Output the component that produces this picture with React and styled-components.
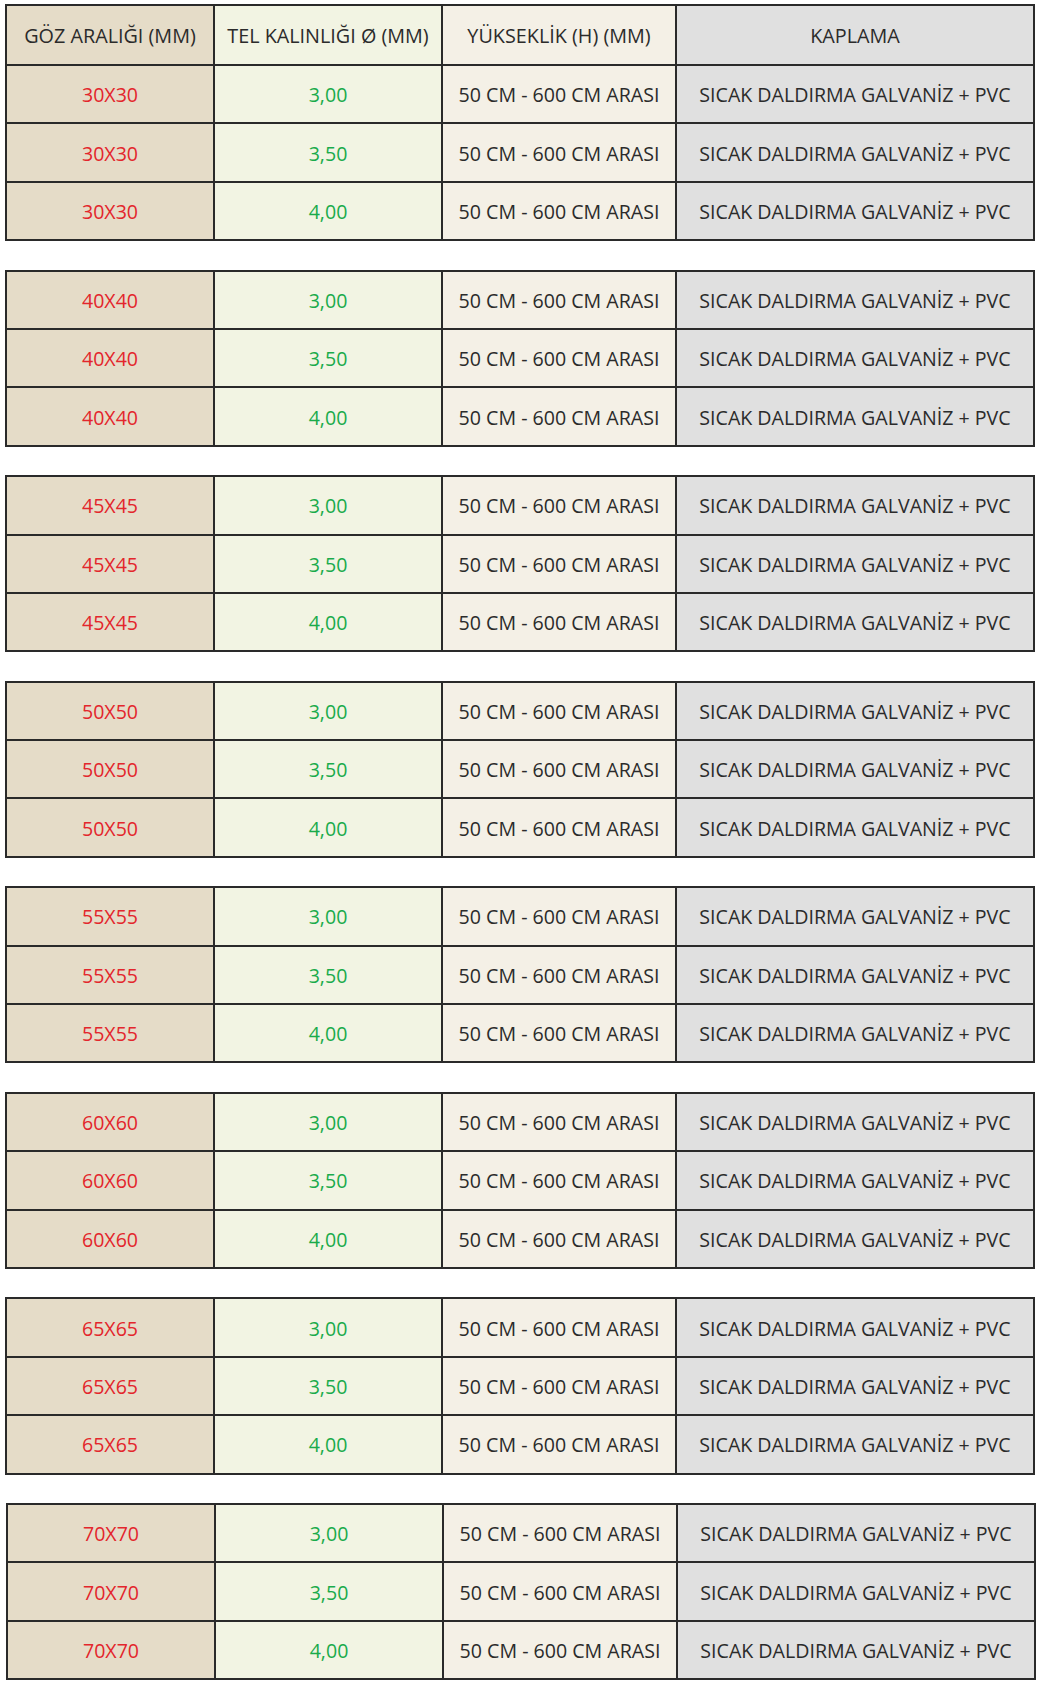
import React from 'react'
import styled, { createGlobalStyle } from 'styled-components'

const GlobalStyle = createGlobalStyle`
    html, body {
        margin: 0;
        padding: 0;
        background: #ffffff;
    }
`

const sizes = ['30X30', '40X40', '45X45', '50X50', '55X55', '60X60', '65X65', '70X70']
const thicknesses = ['3,00', '3,50', '4,00']

const COLS = [
    { bg: '#e5dcc8', width: 208 },
    { bg: '#f2f4e3', width: 228 },
    { bg: '#f4f0e6', width: 234 },
    { bg: '#e0e0e0', width: 358 },
]

export default function App() {
    return (
        <Page>
            <GlobalStyle />
            {sizes.map((size, gi) => (
                <Group key={size} $nudge={gi === sizes.length - 1}>
                    <colgroup>
                        {COLS.map((c, i) => <col key={i} style={{ width: c.width }} />)}
                    </colgroup>
                    {gi === 0 && (
                        <thead>
                            <HeadRow>
                                <HeadCell $bg={COLS[0].bg}>GÖZ ARALIĞI (MM)</HeadCell>
                                <HeadCell $bg={COLS[1].bg}>TEL KALINLIĞI Ø (MM)</HeadCell>
                                <HeadCell $bg={COLS[2].bg}>YÜKSEKLİK (H) (MM)</HeadCell>
                                <HeadCell $bg={COLS[3].bg}>KAPLAMA</HeadCell>
                            </HeadRow>
                        </thead>
                    )}
                    <tbody>
                        {thicknesses.map(t => (
                            <Row key={t}>
                                <Cell $bg={COLS[0].bg} $color="#e3262c">{size}</Cell>
                                <Cell $bg={COLS[1].bg} $color="#1aab4b">{t}</Cell>
                                <Cell $bg={COLS[2].bg}>50 CM - 600 CM ARASI</Cell>
                                <Cell $bg={COLS[3].bg}>SICAK DALDIRMA GALVANİZ + PVC</Cell>
                            </Row>
                        ))}
                    </tbody>
                </Group>
            ))}
        </Page>
    )
}

const Page = styled.div`
    display: flex;
    flex-direction: column;
    gap: 28.4px;
    padding: 4px 0 0 5px;
    width: 1028px;
    font-family: "Open Sans", "DejaVu Sans", sans-serif;
`

const Group = styled.table`
    width: 1028px;
    table-layout: fixed;
    border-collapse: collapse;
    border: 2px solid #2a2a2a;
    margin-left: ${p => (p.$nudge ? '1px' : '0')};
`

const HeadRow = styled.tr`
    height: 60px;
`

const Row = styled.tr`
    height: 58.4px;
`

const HeadCell = styled.th`
    background: ${p => p.$bg};
    border: 2px solid #2a2a2a;
    padding: 0;
    font-weight: 400;
    font-size: 19.8px;
    color: #2b2b2b;
    text-align: center;
    vertical-align: middle;
    white-space: nowrap;
`

const Cell = styled.td`
    background: ${p => p.$bg};
    border: 2px solid #2a2a2a;
    padding: 1px 0 0 0;
    font-size: 19.6px;
    color: ${p => p.$color || '#2b2b2b'};
    text-align: center;
    vertical-align: middle;
    white-space: nowrap;
`
